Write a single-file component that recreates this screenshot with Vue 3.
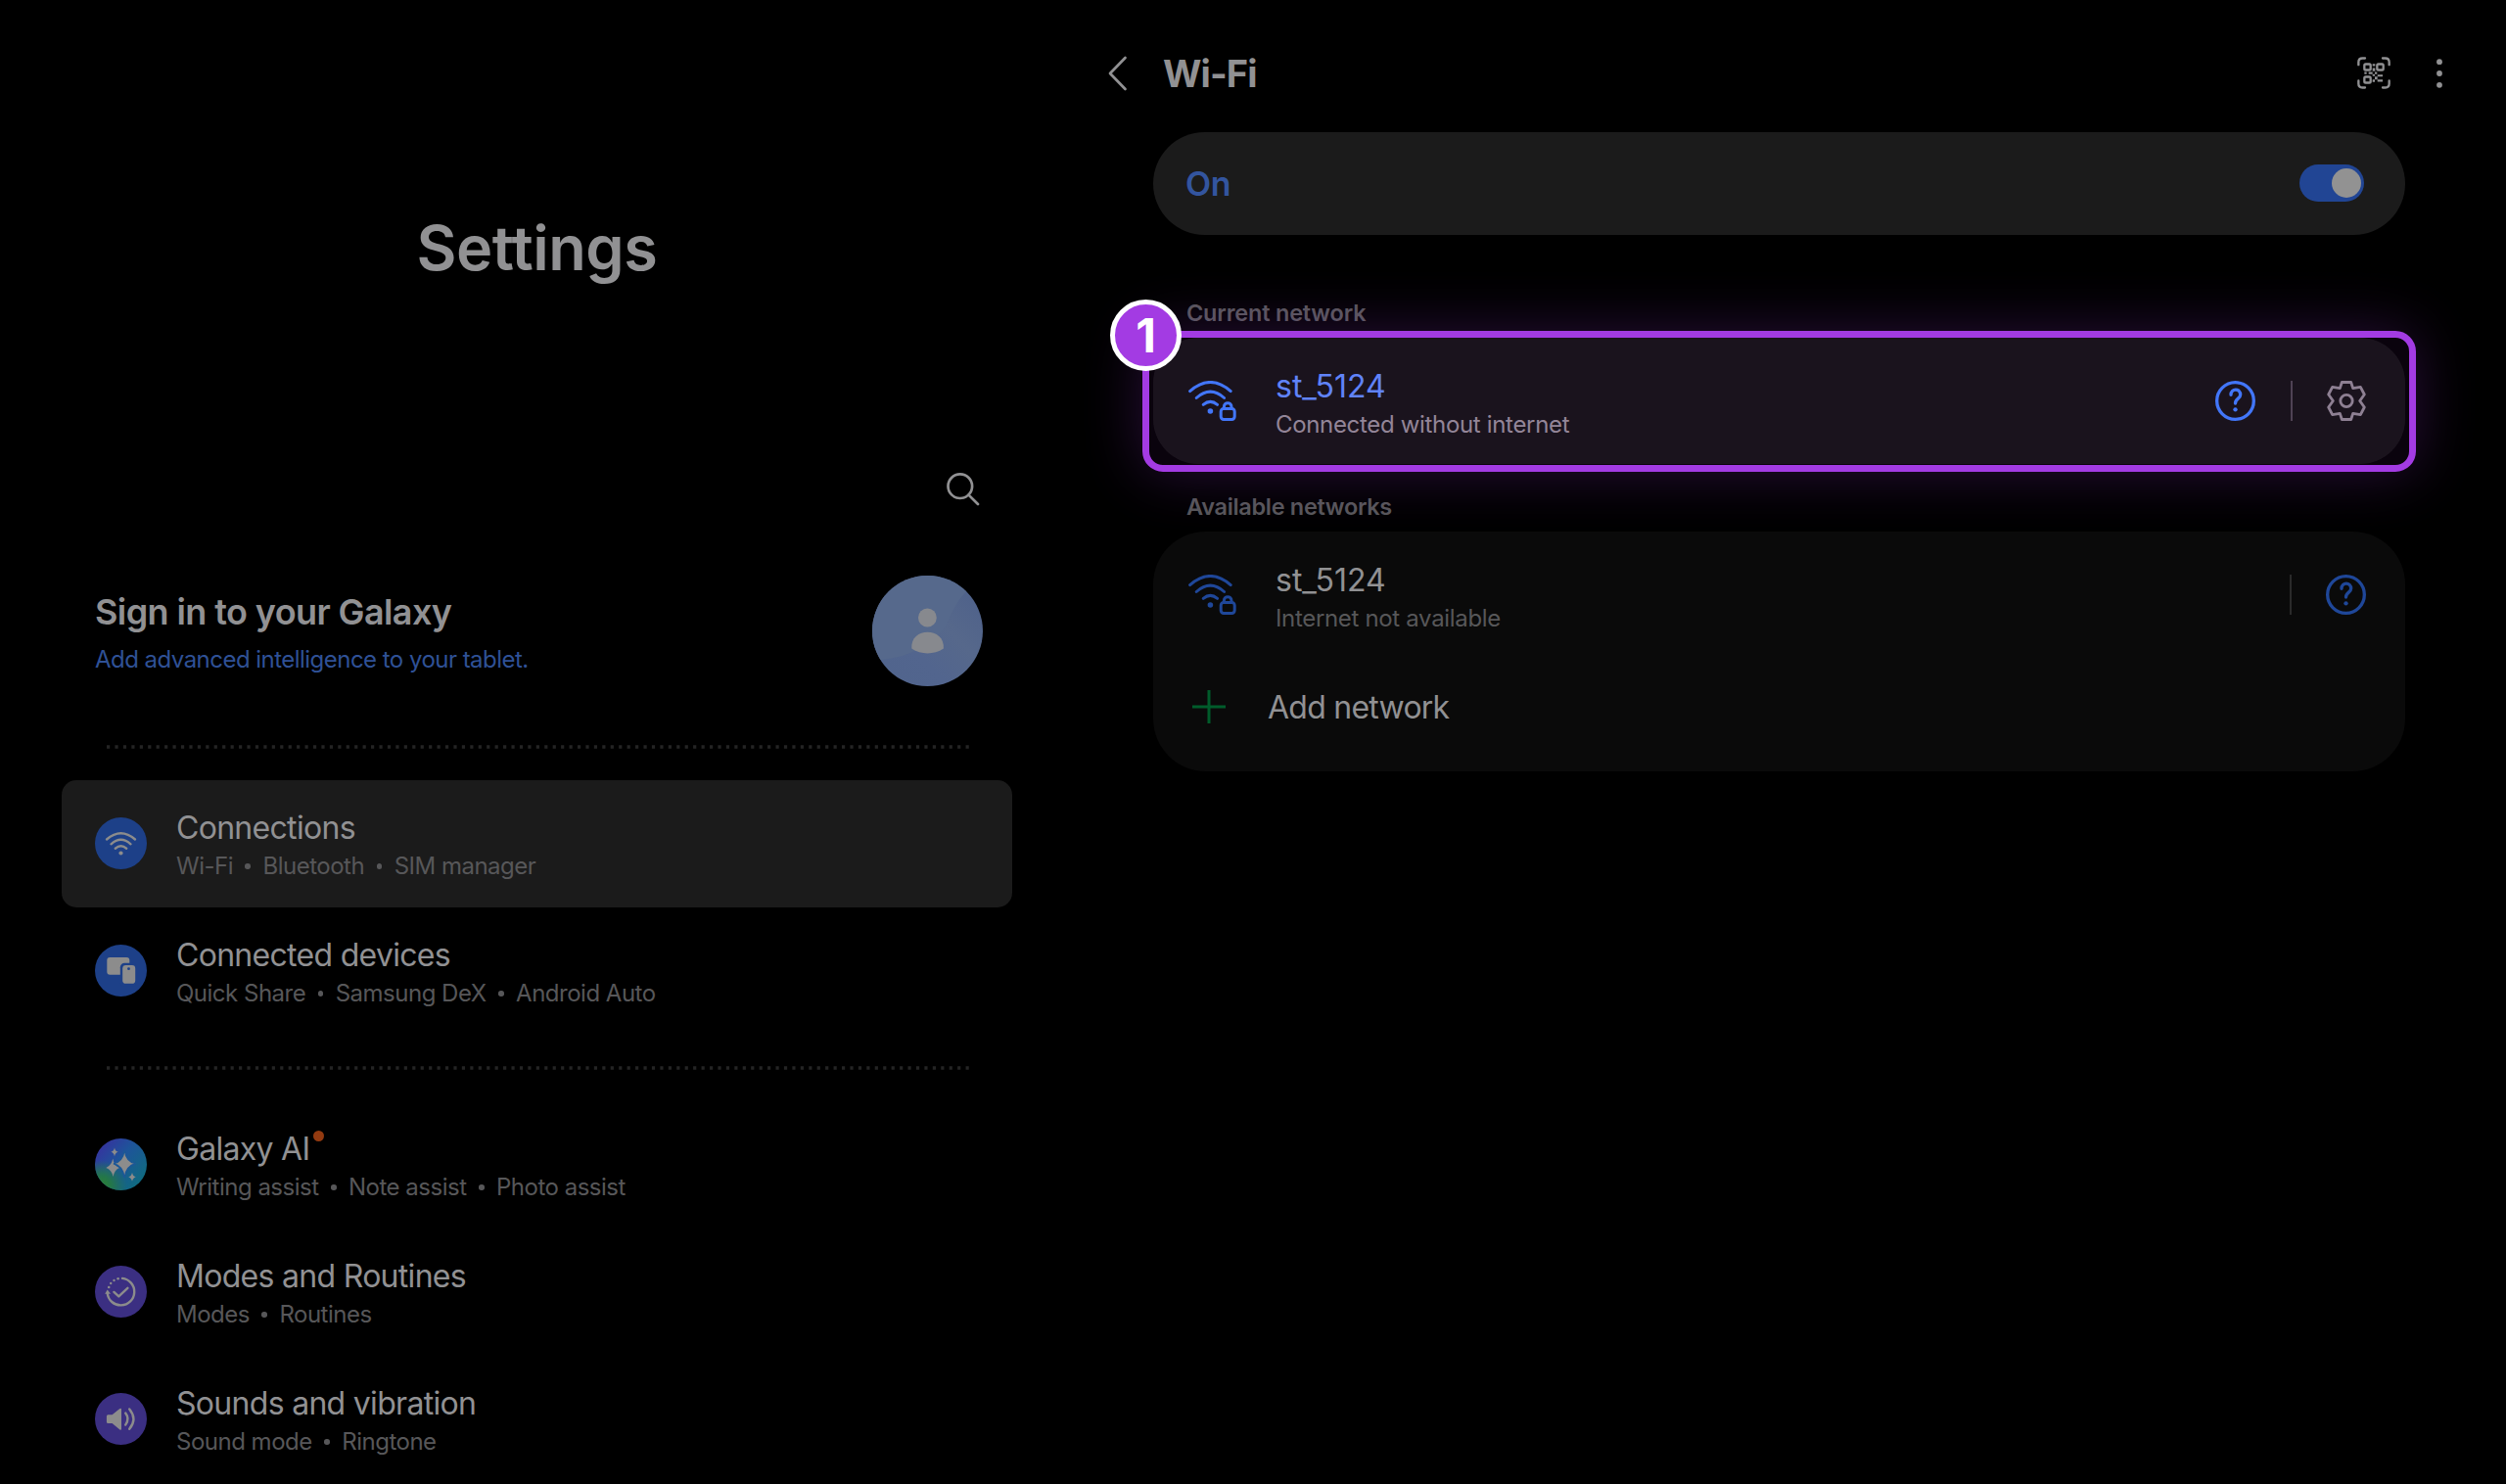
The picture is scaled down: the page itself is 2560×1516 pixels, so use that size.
<template>
  <div class="screen">
    <!-- left pane -->
    <aside class="sidebar">
      <h1 class="page-title">Settings</h1>

      <div class="search-row">
        <svg class="search-icon" viewBox="0 0 34 34">
          <circle cx="13.8" cy="13.7" r="12.3" />
          <path d="M22.5 22.6 L32 32" />
        </svg>
      </div>

      <div class="account">
        <div class="account-text">
          <h2>Sign in to your Galaxy</h2>
          <p>Add advanced intelligence to your tablet.</p>
        </div>
        <svg class="avatar" viewBox="0 0 113 113">
          <defs>
            <clipPath id="avatarClip"><circle cx="56.5" cy="56.5" r="56.5" /></clipPath>
            <linearGradient id="avatarShade" x1="0" y1="1" x2="1" y2="0">
              <stop offset="0" stop-color="#50648c" />
              <stop offset="0.35" stop-color="#52658e" />
              <stop offset="0.6" stop-color="#56688b" />
              <stop offset="1" stop-color="#4c5f8a" />
            </linearGradient>
          </defs>
          <g clip-path="url(#avatarClip)">
            <rect width="113" height="113" fill="url(#avatarShade)" />
            <path d="M0 0 H100 V13 C88 22 81 38 76 50 C62 72 34 84 9 86 H0 Z" fill="#56698c" />
          </g>
          <circle cx="56.4" cy="43" r="9.4" fill="#87898e" />
          <path d="M40.3 74.5 C38.5 52 74.5 52 72.9 74.5 C63 81 50 81 40.3 74.5 Z" fill="#87898e" />
        </svg>
      </div>

      <svg class="dots" viewBox="0 0 884 4"><path d="M0 2 H884" /></svg>

      <ul class="menu">
        <li
          v-for="item in menu"
          :key="item.title"
          class="menu-item"
          :class="{ active: item.active }"
        >
          <div class="menu-row">
            <svg v-if="item.icon === 'wifi'" class="menu-icon" viewBox="0 0 53 53">
              <circle cx="26.5" cy="26.5" r="26.5" fill="#1d4088" />
              <g class="line">
                <path d="M12 22.5 Q26.5 9.9 41 22.5" />
                <path d="M16.5 27.3 Q26.5 18.4 36.5 27.3" />
                <path d="M20.8 31.7 Q26.5 27 32.2 31.7" />
              </g>
              <circle cx="26.5" cy="36.5" r="2.1" class="solid" />
            </svg>
            <svg v-else-if="item.icon === 'devices'" class="menu-icon" viewBox="0 0 53 53">
              <circle cx="26.5" cy="26.5" r="26.5" fill="#1d4088" />
              <rect x="12.3" y="13" width="23" height="17.7" rx="3" class="solid" />
              <rect x="25.8" y="18.7" width="17" height="24" rx="4.5" fill="#1d4088" />
              <rect x="28.2" y="21" width="13" height="18.8" rx="3.4" class="solid" />
              <circle cx="34.5" cy="24.7" r="1.4" fill="#1d4088" />
            </svg>
            <svg v-else-if="item.icon === 'ai'" class="menu-icon" viewBox="0 0 53 53">
              <defs>
                <linearGradient id="aiBase" x1="0.1" y1="0.1" x2="0.9" y2="0.8">
                  <stop offset="0" stop-color="#36329f" />
                  <stop offset="0.45" stop-color="#1e549a" />
                  <stop offset="1" stop-color="#106a80" />
                </linearGradient>
                <radialGradient id="aiGreen" cx="0.12" cy="0.92" r="0.5">
                  <stop offset="0" stop-color="#2d8030" />
                  <stop offset="0.4" stop-color="#23764b" />
                  <stop offset="1" stop-color="#23764b" stop-opacity="0" />
                </radialGradient>
              </defs>
              <circle cx="26.5" cy="26.5" r="26.5" fill="url(#aiBase)" />
              <circle cx="26.5" cy="26.5" r="26.5" fill="url(#aiGreen)" />
              <path class="solid" d="M18.3 20.5 Q19.5 28.3 25 30 Q20 32 18.6 39 Q17 32 11.3 30 Q17 27.5 18.3 20.5 Z" />
              <path
                class="solid"
                stroke="#1c5796"
                stroke-width="1.4"
                d="M30.2 12 Q32 24 41.5 25.8 Q32 28 30.2 40 Q28.4 28 19 25.8 Q28.4 24 30.2 12 Z"
              />
              <path class="solid" d="M20 9.4 Q20.8 13 23.7 13.8 Q20.8 14.6 20 18.2 Q19.2 14.6 16.3 13.8 Q19.2 13 20 9.4 Z" />
              <path class="solid" d="M38 35 Q38.8 38.6 41.7 39.4 Q38.8 40.2 38 43.8 Q37.2 40.2 34.3 39.4 Q37.2 38.6 38 35 Z" />
            </svg>
            <svg v-else-if="item.icon === 'modes'" class="menu-icon" viewBox="0 0 53 53">
              <circle cx="26.5" cy="26.5" r="26.5" fill="#3b2f82" />
              <g class="line">
                <path d="M28 12.9 A13.8 13.8 0 1 1 12.7 28" />
                <path d="M19.4 26.9 L24.3 31.4 L33.4 22.8" />
              </g>
              <path class="solid" d="M12.7 24.6 L16 28.8 H10.2 Z" />
              <circle cx="14.2" cy="22" r="1.3" class="solid" />
              <circle cx="16.2" cy="18" r="1.2" class="solid" />
              <circle cx="19.5" cy="15" r="1.2" class="solid" />
              <circle cx="23.6" cy="13.3" r="1.3" class="solid" />
            </svg>
            <svg v-else class="menu-icon" viewBox="0 0 53 53">
              <circle cx="26.5" cy="26.5" r="26.5" fill="#3b2f82" />
              <path
                class="solid"
                d="M13.4 22.3 H17.6 L25.4 16 Q27 15 27 17 V36.4 Q27 38.4 25.4 37.4 L17.6 31 H13.4 Q11.9 31 11.9 29.5 V23.8 Q11.9 22.3 13.4 22.3 Z"
              />
              <g class="line">
                <path d="M31.2 20.6 Q35.8 26.5 31.2 32.6" />
                <path d="M35.2 16.4 Q43.6 26.5 35.2 36.8" />
              </g>
            </svg>

            <div class="menu-text">
              <h3>{{ item.title }}<i v-if="item.badge" class="new-dot"></i></h3>
              <p class="tags">
                <span v-for="tag in item.tags" :key="tag" class="tag">{{ tag }}</span>
              </p>
            </div>
          </div>
          <svg v-if="item.groupEnd" class="dots" viewBox="0 0 884 4"><path d="M0 2 H884" /></svg>
        </li>
      </ul>
    </aside>

    <!-- right pane -->
    <main class="content">
      <header class="topbar">
        <svg class="back-icon" viewBox="0 0 20 36"><path d="M17.5 2 L2 18 L17.5 34" /></svg>
        <h2 class="topbar-title">Wi-Fi</h2>
        <svg class="qr-icon" viewBox="0 0 102 98">
          <path d="M4 24 V16 Q4 4 16 4 H24" />
          <path d="M78 4 H86 Q98 4 98 16 V24" />
          <path d="M98 73 V82 Q98 94 86 94 H78" />
          <path d="M24 94 H16 Q4 94 4 82 V73" />
          <rect x="22" y="22" width="19" height="18" rx="4" />
          <rect x="61" y="22" width="19" height="18" rx="4" />
          <rect x="22" y="61" width="19" height="18" rx="4" />
          <path
            class="qr-bits"
            d="M47 21h8v7h-8z M47 34h8v10h-8z M22 46h7v7h-7z M35 46h12v7h-12z M54 46h7v7h-7z M47 53h7v6h-7z M62 54h16v6h-16z M54 60h8v9h-8z M47 69h7v8h-7z M62 69h16v7h-16z"
          />
        </svg>
        <svg class="more-icon" viewBox="0 0 6 30">
          <circle cx="3" cy="3.2" r="2.9" />
          <circle cx="3" cy="15" r="2.9" />
          <circle cx="3" cy="26.8" r="2.9" />
        </svg>
      </header>

      <div class="switch-card">
        <span class="switch-label">On</span>
        <button class="toggle" :class="{ on: wifiOn }" @click="wifiOn = !wifiOn"><i></i></button>
      </div>

      <h4 class="section-label">Current network</h4>
      <section class="card current">
        <div class="network">
          <svg class="signal" viewBox="0 0 49 41">
            <path d="M1.6 10.6 Q22.4 -7.6 43.2 10.6" />
            <path d="M8.2 17.5 Q22.4 4.8 36.6 17.5" />
            <path d="M15.2 24.4 Q22.4 18.4 29.6 24.4" />
            <circle cx="22.4" cy="31" r="2.8" />
            <rect x="33.2" y="28.6" width="14" height="10.8" rx="2.8" />
            <path d="M36.4 28.4 V26.6 C36.4 21.4 44 21.4 44 26.6 V28.4" />
          </svg>
          <div class="network-text">
            <h3>st_5124</h3>
            <p>Connected without internet</p>
          </div>
          <svg class="help" viewBox="0 0 123 123">
            <circle cx="61.5" cy="61.5" r="56.5" />
            <path d="M48 43 C48 22 77 22 77 43 C77 55 61.5 54 61.5 69" />
            <circle cx="61.5" cy="88" r="6.5" class="help-dot" />
          </svg>
          <i class="divider"></i>
          <svg class="gear" viewBox="0 0 120 123">
            <path
              d="M46 4.5 H74 L80 23 L103 19 L115 42 L101 61.5 L115 81 L103 104 L80 100 L74 118.5 H46 L40 100 L17 104 L5 81 L19 61.5 L5 42 L17 19 L40 23 Z"
            />
            <circle cx="60" cy="61.5" r="18.5" />
          </svg>
        </div>
        <div class="highlight"><b class="step">1</b></div>
      </section>

      <h4 class="section-label second">Available networks</h4>
      <section class="card available">
        <div class="network">
          <svg class="signal" viewBox="0 0 49 41">
            <path d="M1.6 10.6 Q22.4 -7.6 43.2 10.6" />
            <path d="M8.2 17.5 Q22.4 4.8 36.6 17.5" />
            <path d="M15.2 24.4 Q22.4 18.4 29.6 24.4" />
            <circle cx="22.4" cy="31" r="2.8" />
            <rect x="33.2" y="28.6" width="14" height="10.8" rx="2.8" />
            <path d="M36.4 28.4 V26.6 C36.4 21.4 44 21.4 44 26.6 V28.4" />
          </svg>
          <div class="network-text">
            <h3>st_5124</h3>
            <p>Internet not available</p>
          </div>
          <i class="divider"></i>
          <svg class="help" viewBox="0 0 123 123">
            <circle cx="61.5" cy="61.5" r="56.5" />
            <path d="M48 43 C48 22 77 22 77 43 C77 55 61.5 54 61.5 69" />
            <circle cx="61.5" cy="88" r="6.5" class="help-dot" />
          </svg>
        </div>
        <div class="add-network">
          <svg class="plus" viewBox="0 0 34 34"><path d="M17 0 V34 M0 17 H34" /></svg>
          <span>Add network</span>
        </div>
      </section>
    </main>
  </div>
</template>

<script setup>
  import { ref } from 'vue';

  const wifiOn = ref(true);

  const menu = [
    {
      title: 'Connections',
      icon: 'wifi',
      tags: ['Wi-Fi', 'Bluetooth', 'SIM manager'],
      active: true,
    },
    {
      title: 'Connected devices',
      icon: 'devices',
      tags: ['Quick Share', 'Samsung DeX', 'Android Auto'],
      groupEnd: true,
    },
    {
      title: 'Galaxy AI',
      icon: 'ai',
      tags: ['Writing assist', 'Note assist', 'Photo assist'],
      badge: true,
    },
    { title: 'Modes and Routines', icon: 'modes', tags: ['Modes', 'Routines'] },
    { title: 'Sounds and vibration', icon: 'sound', tags: ['Sound mode', 'Ringtone'] },
  ];
</script>

<style>
  body {
    background: #000;
    overflow: hidden;
  }
</style>

<style scoped>
  .screen {
    display: flex;
    width: 2560px;
    height: 1516px;
    overflow: hidden;
    background: #000;
    color: #919193;
    font-family: Inter, 'Liberation Sans', sans-serif;
  }

  h1,
  h2,
  h3,
  h4,
  p,
  ul {
    margin: 0;
    padding: 0;
    font-weight: 400;
  }

  svg {
    display: block;
    flex: none;
  }

  /* left pane */
  .sidebar {
    width: 1097px;
    flex: none;
  }

  .page-title {
    padding-top: 213px;
    font-size: 63px;
    line-height: 80px;
    font-weight: 600;
    text-align: center;
    letter-spacing: -0.5px;
  }

  .search-row {
    display: flex;
    justify-content: flex-end;
    padding: 190px 96px 0 0;
  }

  .search-icon {
    width: 34px;
    height: 34px;
    fill: none;
    stroke: #919193;
    stroke-width: 2.7;
    stroke-linecap: round;
  }

  .account {
    display: flex;
    align-items: center;
    justify-content: space-between;
    margin: 71px 93px 0 97px;
    height: 113px;
  }

  .account-text {
    padding-top: 4px;
  }

  .account h2 {
    font-size: 36px;
    line-height: 48px;
    font-weight: 600;
    letter-spacing: -0.6px;
  }

  .account p {
    margin-top: 7px;
    font-size: 24px;
    line-height: 36px;
    letter-spacing: -0.53px;
    color: #2f5196;
  }

  .avatar {
    width: 113px;
    height: 113px;
  }

  .dots {
    width: 884px;
    height: 4px;
    margin: 60px 0 32px 109px;
    fill: none;
    stroke: #242424;
    stroke-width: 3.4;
    stroke-dasharray: 3.2 5.238;
  }

  .menu {
    list-style: none;
  }

  .menu-row {
    display: flex;
    align-items: center;
    gap: 30px;
    height: 130px;
    margin: 0 63px;
    padding-left: 34px;
    box-sizing: border-box;
    border-radius: 15px;
  }

  .menu-item.active .menu-row {
    background: #1b1b1b;
  }

  .menu-item .dots {
    margin: 32px 0 32px 109px;
  }

  .menu-icon {
    width: 53px;
    height: 53px;
    margin-bottom: 1px;
  }

  .menu-icon .line {
    fill: none;
    stroke: #8c8c8c;
    stroke-width: 2.4;
    stroke-linecap: round;
    stroke-linejoin: round;
  }

  .menu-icon .solid {
    fill: #8c8c8c;
  }

  .menu-text {
    padding-top: 4px;
  }

  .menu-text h3 {
    position: relative;
    width: max-content;
    font-size: 32px;
    line-height: 42px;
    letter-spacing: -0.7px;
  }

  .new-dot {
    position: absolute;
    top: 2px;
    right: -15px;
    width: 11px;
    height: 11px;
    border-radius: 50%;
    background: #933a10;
  }

  .tags {
    display: flex;
    font-size: 24px;
    line-height: 36px;
    letter-spacing: -0.5px;
    color: #575759;
  }

  .tag {
    display: flex;
    align-items: center;
  }

  .tag + .tag::before {
    content: '';
    width: 5.5px;
    height: 5.5px;
    margin: 0 12.5px;
    border-radius: 50%;
    background: currentColor;
  }

  /* right pane */
  .content {
    flex: 1;
    min-width: 0;
    padding: 15px 103px 0 81px;
  }

  .topbar {
    display: flex;
    align-items: center;
    height: 120px;
    margin: 0 -38px 0 -46px;
  }

  .back-icon {
    width: 20px;
    height: 36px;
    fill: none;
    stroke: #919193;
    stroke-width: 2.7;
    stroke-linecap: round;
    stroke-linejoin: round;
  }

  .topbar-title {
    margin: 0 auto 0 36px;
    font-size: 38px;
    line-height: 48px;
    font-weight: 700;
    letter-spacing: -0.9px;
  }

  .qr-icon {
    width: 34px;
    height: 33px;
    margin: 0 47px 2px 0;
    fill: none;
    stroke: #919193;
    stroke-width: 7;
    stroke-linecap: round;
  }

  .qr-bits {
    fill: #919193;
    stroke: none;
  }

  .more-icon {
    width: 6px;
    height: 30px;
    fill: #919193;
  }

  .switch-card {
    display: flex;
    align-items: center;
    justify-content: space-between;
    height: 105px;
    padding: 0 42px 0 33px;
    border-radius: 53px;
    background: #1b1b1b;
  }

  .switch-label {
    color: #33559f;
    font-size: 34px;
    font-weight: 600;
    letter-spacing: -0.5px;
  }

  .toggle {
    display: flex;
    align-items: center;
    width: 66px;
    height: 38px;
    margin-bottom: 1px;
    padding: 0 3px;
    border: none;
    border-radius: 19px;
    background: #444;
    cursor: pointer;
  }

  .toggle.on {
    justify-content: flex-end;
    background: #214594;
  }

  .toggle i {
    width: 30px;
    height: 30px;
    border-radius: 50%;
    background: #929292;
  }

  .section-label {
    display: flex;
    align-items: flex-end;
    height: 105px;
    padding: 0 0 10px 34px;
    box-sizing: border-box;
    font-size: 23.5px;
    line-height: 30px;
    font-weight: 600;
    letter-spacing: -0.2px;
    color: #575759;
  }

  .section-label.second {
    height: 69px;
    letter-spacing: -0.32px;
  }

  .card {
    position: relative;
    background: #0a0a0a;
  }

  .card.current {
    height: 129px;
    border-radius: 46px;
    background: #121212;
  }

  .card.available {
    height: 245px;
    border-radius: 54px;
  }

  .network {
    display: flex;
    align-items: center;
    height: 129px;
    padding: 0 40px 0 36px;
  }

  .signal {
    width: 49px;
    height: 41px;
    fill: none;
    stroke: #1f4799;
    stroke-width: 3;
    stroke-linecap: round;
  }

  .signal circle {
    fill: #1f4799;
    stroke: none;
  }

  .network-text {
    margin: 0 auto 0 40px;
    padding-top: 6px;
  }

  .network-text h3 {
    font-size: 32px;
    line-height: 42px;
  }

  .network-text p {
    font-size: 24px;
    line-height: 36px;
    letter-spacing: -0.33px;
    color: #575759;
  }

  .help {
    width: 41px;
    height: 41px;
    fill: none;
    stroke: #1f4799;
    stroke-width: 10;
    stroke-linecap: round;
  }

  .help .help-dot {
    fill: #1f4799;
    stroke: none;
  }

  .divider {
    width: 2px;
    height: 41px;
    margin: 0 35px 0 36px;
    background: #2a2a2a;
  }

  .gear {
    width: 40px;
    height: 41px;
    fill: none;
    stroke: #8d858f;
    stroke-width: 8.5;
    stroke-linejoin: round;
  }

  .current .network-text h3 {
    color: #5c88fb;
  }

  .current .network-text p {
    color: #928b94;
  }

  .current .signal,
  .current .help {
    stroke: #3c7bfb;
  }

  .current .signal circle,
  .current .help .help-dot {
    fill: #3c7bfb;
  }

  .current .divider {
    background: #4a434c;
  }

  /* tutorial step frame, sits over the current network card */
  .highlight {
    position: absolute;
    inset: -7px -11px -8px -11.5px;
    box-sizing: border-box;
    border: 7px solid #a33be3;
    border-radius: 21px;
    background: rgba(163, 59, 227, 0.06);
    box-shadow: 0 0 60px rgba(163, 59, 227, 0.25);
  }

  .step {
    position: absolute;
    top: -39px;
    left: -39.5px;
    display: flex;
    align-items: center;
    justify-content: center;
    width: 73px;
    height: 73px;
    box-sizing: border-box;
    border: 5px solid #fff;
    border-radius: 50%;
    background: #a33be3;
    color: #fff;
    font-size: 48px;
    line-height: 1;
    font-weight: 700;
  }

  .add-network {
    display: flex;
    align-items: center;
    gap: 43px;
    height: 100px;
    padding-left: 40px;
    font-size: 32px;
    letter-spacing: -0.75px;
  }

  .plus {
    width: 34px;
    height: 34px;
    stroke: #005c2b;
    stroke-width: 3;
  }
</style>
